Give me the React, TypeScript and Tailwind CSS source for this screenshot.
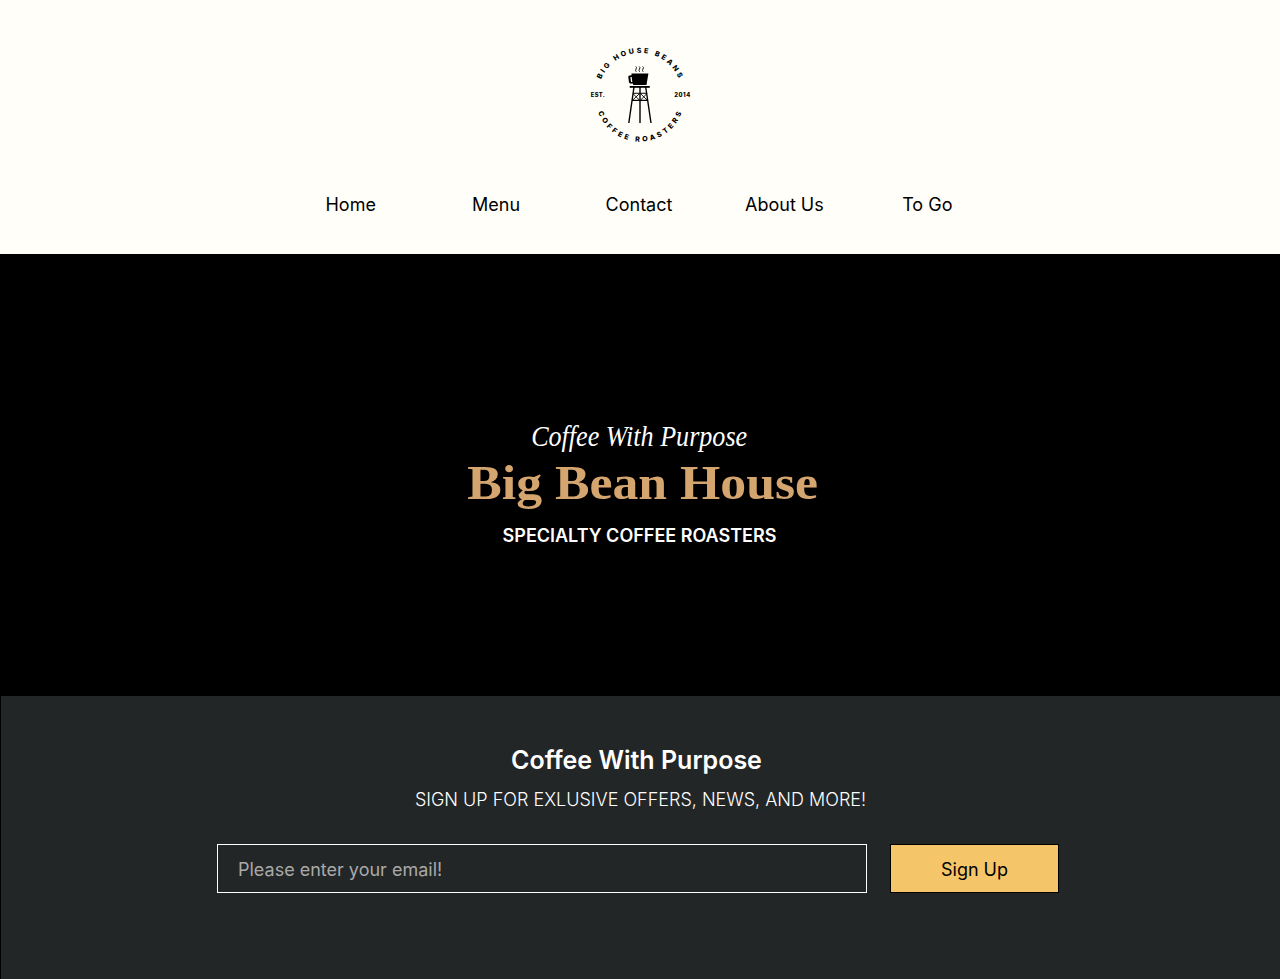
const navItems = [
  { label: "Home", shift: "mr-px" },
  { label: "Menu", shift: "ml-px" },
  { label: "Contact", shift: "mr-0.5" },
  { label: "About Us", shift: "" },
  { label: "To Go", shift: "mr-[3px]" },
];

function Logo() {
  return (
    <svg className="h-[110px] w-[120px]" viewBox="580 40 120 110" fill="none" stroke="#000" role="img" aria-label="Big House Beans">
      <defs>
        <path id="arc-top" d="M 601.2 79.3 A 42 42 0 0 1 679.4 80.1" />
        <path id="arc-bottom" d="M 598 112.2 A 44.6 44.6 0 0 0 682 111.8" />
      </defs>
      <g fill="#000" stroke="none" fontFamily="Inter, sans-serif" fontWeight="800" fontSize="7.1">
        <text textLength="98"><textPath href="#arc-top" textLength="98">BIG HOUSE BEANS</textPath></text>
        <text textLength="108"><textPath href="#arc-bottom" textLength="108">COFFEE ROASTERS</textPath></text>
        <text x="590.8" y="96.6" fontSize="5.8" textLength="14">EST.</text>
        <text x="674.2" y="96.6" fontSize="5.8" textLength="16">2014</text>
      </g>
      <path d="M631.5 73.5 H648.4 L646.5 85 H633.3 L632.8 83.5 C629.5 83.8 629 83 628.8 81 L628.3 77 C628.2 75.8 629 75.1 631.5 75.2 Z" fill="#000" stroke="none" />
      <path d="M630.4 77.1 L631.7 76.9 L632.3 81.9 L631 82 Z" fill="#fffef9" stroke="none" />
      <path d="M635.8 66.5 q1.5 1 .2 2.6 q-.9 1.3 .2 2.7 M639.2 66.5 q1.5 1 .2 2.6 q-.9 1.3 .2 2.7 M642.7 66.5 q1.5 1 .2 2.6 q-.9 1.3 .2 2.7" strokeWidth=".9" />
      <path d="M629.7 86.9 H649.8" strokeWidth="1.8" />
      <path d="M634 87 L628.8 123 M640 87 V123 M645.7 87 L651 123" strokeWidth="1.4" />
      <path d="M633 93.3 H647 M632 100.4 H648" strokeWidth="1.1" />
      <path d="M633.2 93.8 L639.3 100 M639.3 93.8 L632.8 100 M640.7 93.8 L647 100 M646.7 93.8 L640.7 100" strokeWidth=".9" />
    </svg>
  );
}

export default function App() {
  return (
    <div className="flex h-[979px] w-full flex-col overflow-hidden bg-black font-['Inter',sans-serif] text-lg">
      <header className="flex h-[254px] flex-col items-center bg-[#fffef9] pt-10 text-black">
        <Logo />
        <nav className="mt-[41px] grid w-[722px] grid-cols-5 text-center leading-7">
          {navItems.map(({ label, shift }) => (
            <a key={label} href="#" className={shift}>{label}</a>
          ))}
        </nav>
      </header>
      <main className="flex h-[442px] flex-col items-center pt-[162px] text-white">
        <p className="mr-0.5 origin-center scale-x-[0.87] font-['Liberation_Serif',serif] text-[30px] leading-10 italic whitespace-nowrap">Coffee With Purpose</p>
        <h1 className="ml-1.5 origin-center scale-x-[1.078] font-['Liberation_Serif',serif] text-[48px] leading-[54px] font-bold whitespace-nowrap text-[#d4a56e]">Big Bean House</h1>
        <p className="mt-3 mr-px font-semibold leading-7">SPECIALTY COFFEE ROASTERS</p>
      </main>
      <section className="ml-px flex flex-1 flex-col items-center bg-[#232627] pt-12 text-white">
        <h2 className="mr-2 text-[25px] leading-8 font-semibold">Coffee With Purpose</h2>
        <p className="mt-2.5 leading-7 font-light">SIGN UP FOR EXLUSIVE OFFERS, NEWS, AND MORE!</p>
        <form className="mt-[30px] mr-[5px] flex gap-[23px]">
          <input type="email" placeholder="Please enter your email!" className="h-[49px] w-[650px] border border-white bg-transparent px-5 pt-0.5 placeholder:text-[#a9a9a9]" />
          <button type="button" className="h-[49px] w-[169px] border border-black bg-[#f5c569] pt-0.5 text-black">Sign Up</button>
        </form>
      </section>
    </div>
  );
}
